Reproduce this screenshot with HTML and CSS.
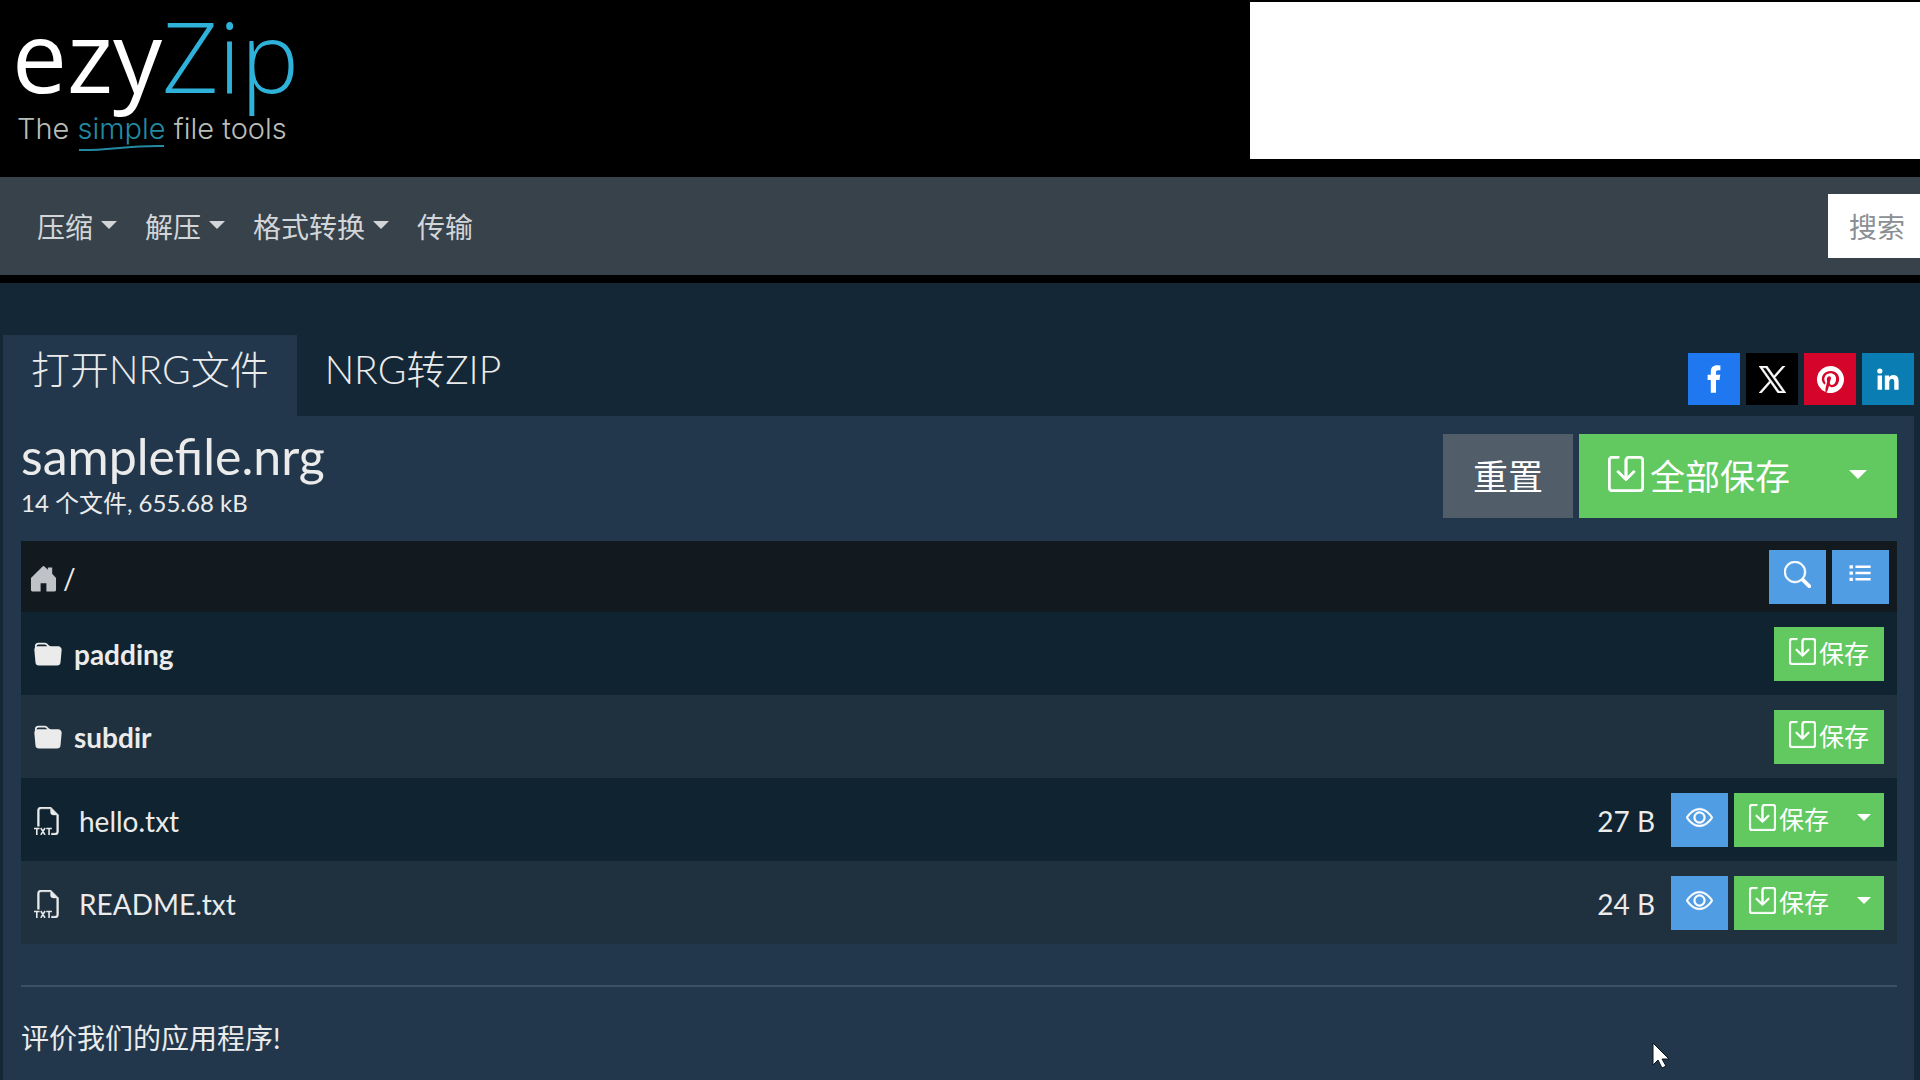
FILE: index.html
```html
<!DOCTYPE html>
<html lang="zh-CN">
<head>
    <meta charset="UTF-8">
    <meta name="viewport" content="width=device-width, initial-scale=1.0">
    <title>ezyZip</title>
    <link rel="stylesheet" href="styles.css">
</head>
<body>
    <!-- Shared icons -->
    <svg class="sprite" aria-hidden="true">
        <symbol id="icon-save" viewBox="0 0 16 16">
            <path stroke="currentColor" stroke-width=".4" d="M2 1a1 1 0 0 0-1 1v12a1 1 0 0 0 1 1h12a1 1 0 0 0 1-1V2a1 1 0 0 0-1-1H9.5a1 1 0 0 0-1 1v7.293l2.646-2.647a.5.5 0 0 1 .708.708l-3.5 3.5a.5.5 0 0 1-.708 0l-3.5-3.5a.5.5 0 1 1 .708-.708L7.5 9.293V2a2 2 0 0 1 2-2H14a2 2 0 0 1 2 2v12a2 2 0 0 1-2 2H2a2 2 0 0 1-2-2V2a2 2 0 0 1 2-2h2.5a.5.5 0 0 1 0 1z"/>
        </symbol>
        <symbol id="icon-folder" viewBox="0 0 16 16">
            <path d="M9.828 3h3.982a2 2 0 0 1 1.992 2.181l-.637 7A2 2 0 0 1 13.174 14H2.825a2 2 0 0 1-1.991-1.819l-.637-7a2 2 0 0 1 .342-1.31L.5 3a2 2 0 0 1 2-2h3.672a2 2 0 0 1 1.414.586l.828.828A2 2 0 0 0 9.828 3m-8.322.12q.322-.119.684-.12h5.396l-.707-.707A1 1 0 0 0 6.172 2H2.5a1 1 0 0 0-1 .981z"/>
        </symbol>
        <symbol id="icon-txt" viewBox="0 0 16 16">
            <path fill-rule="evenodd" stroke="currentColor" stroke-width=".3" d="M14 4.5V14a2 2 0 0 1-2 2h-2v-1h2a1 1 0 0 0 1-1V4.500h-2A1.500 1.500 0 0 1 9.500 3V1H4a1 1 0 0 0-1 1v9H2V2a2 2 0 0 1 2-2h5.500z"/>
            <path fill="none" stroke="currentColor" stroke-width=".9" d="M0 12.300h3.200M1.600 12.300v3.700M3.900 12l2.400 3.900M6.300 12l-2.400 3.900M7 12.300h3.200M8.600 12.300v3.700"/>
        </symbol>
        <symbol id="icon-eye" viewBox="0 0 16 16">
            <path stroke="currentColor" stroke-width=".3" d="M16 8s-3-5.500-8-5.500S0 8 0 8s3 5.500 8 5.500S16 8 16 8M1.173 8a13 13 0 0 1 1.660-2.043C4.120 4.668 5.880 3.500 8 3.500s3.879 1.168 5.168 2.457A13 13 0 0 1 14.828 8q-.086.130-.195.288c-.335.480-.830 1.120-1.465 1.755C11.879 11.332 10.119 12.500 8 12.500s-3.879-1.168-5.168-2.457A13 13 0 0 1 1.172 8z"/>
            <path stroke="currentColor" stroke-width=".3" d="M8 5.500a2.500 2.500 0 1 0 0 5 2.500 2.500 0 0 0 0-5M4.500 8a3.500 3.500 0 1 1 7 0 3.500 3.500 0 0 1-7 0"/>
        </symbol>
    </svg>

    <header class="header">
        <a class="logo" href="#" aria-label="ezyZip">
            <svg width="290" height="160" viewBox="0 0 290 160">
                <text class="logo-name" x="0" y="93">ezy<tspan class="logo-zip">Zip</tspan></text>
                <text class="logo-tagline" x="5" y="139">The <tspan class="logo-simple">simple</tspan> file tools</text>
                <path d="M67 150C93 151 118 145 152 146" fill="none" stroke="#248aa3" stroke-width="2"/>
            </svg>
        </a>
        <div class="ad"></div>
    </header>

    <nav class="navbar">
        <a class="nav-link dropdown" href="#">压缩</a>
        <a class="nav-link dropdown" href="#">解压</a>
        <a class="nav-link dropdown" href="#">格式转换</a>
        <a class="nav-link" href="#">传输</a>
        <form class="search">
            <input type="text" placeholder="搜索" aria-label="搜索">
        </form>
    </nav>

    <div class="tab-bar">
        <div class="tabs">
            <a class="tab active" href="#">打开NRG文件</a>
            <a class="tab" href="#">NRG转ZIP</a>
        </div>
        <div class="share">
            <a class="facebook" href="#" aria-label="Facebook">
                <svg viewBox="0 0 32 32"><path d="M13 29V17h-3v-5h3V9c0-4 2.300-6 6-6l3 .300v4.500h-2c-1.700 0-2.100.800-2.100 2.200v2h4l-.700 5h-3.300v12z"/></svg>
            </a>
            <a class="x" href="#" aria-label="X">
                <svg viewBox="0 0 24 24"><path stroke="currentColor" stroke-width=".6" d="M14.258 10.152 23.176 0h-2.113l-7.747 8.813L7.133 0H0l9.352 13.328L0 23.973h2.113l8.176-9.309 6.531 9.309h7.133zm-2.895 3.293-.949-1.328L2.875 1.560h3.246l6.086 8.523.945 1.328 7.910 11.078h-3.246z"/></svg>
            </a>
            <a class="pinterest" href="#" aria-label="Pinterest">
                <svg viewBox="0 0 16 16"><path d="M8 0a8 8 0 0 0-2.915 15.452c-.070-.633-.134-1.606.027-2.297.146-.625.938-3.977.938-3.977s-.239-.479-.239-1.187c0-1.113.645-1.943 1.448-1.943.682 0 1.012.512 1.012 1.127 0 .686-.437 1.712-.663 2.663-.188.796.400 1.446 1.185 1.446 1.422 0 2.515-1.500 2.515-3.664 0-1.915-1.377-3.254-3.342-3.254-2.276 0-3.612 1.707-3.612 3.471 0 .688.265 1.425.595 1.826a.240.240 0 0 1 .056.230c-.061.252-.196.796-.222.907-.035.146-.116.177-.268.107-1-.465-1.624-1.926-1.624-3.100 0-2.523 1.834-4.840 5.286-4.840 2.775 0 4.932 1.977 4.932 4.620 0 2.757-1.739 4.976-4.151 4.976-.811 0-1.573-.421-1.834-.919l-.498 1.902c-.181.695-.669 1.566-.995 2.097A8 8 0 1 0 8 0"/></svg>
            </a>
            <a class="linkedin" href="#" aria-label="LinkedIn">
                <svg viewBox="0 0 32 32"><path d="M6.200 12.600h4.200V26H6.200zM8.300 6a2.400 2.400 0 1 1 0 4.900 2.400 2.400 0 0 1 0-4.900M13 12.600h4v1.800c.600-1.100 2-2.200 4-2.200 4.200 0 5 2.800 5 6.400V26h-4.100v-6.500c0-1.600 0-3.600-2.200-3.600s-2.500 1.700-2.500 3.500V26H13z"/></svg>
            </a>
        </div>
    </div>

    <main class="panel">
        <div class="file-header">
            <div>
                <h1>samplefile.nrg</h1>
                <div class="summary">14 个文件, 655.68 kB</div>
            </div>
            <div class="file-actions">
                <button class="btn btn-lg btn-grey" type="button">重置</button>
                <div class="btn-group">
                    <button class="btn btn-lg btn-green" type="button"><svg><use href="#icon-save"/></svg>全部保存</button>
                    <button class="btn btn-lg btn-green btn-caret" type="button" aria-label="更多保存选项"></button>
                </div>
            </div>
        </div>

        <div class="toolbar">
            <a class="home" href="#" aria-label="首页">
                <svg viewBox="0 0 28 28"><path d="M13 1.500q1-1 2 0l3.500 3.500V2.500h4.500V9l4 4.500V26q0 1.500-1.500 1.500H17V19h-6v8.500H2.500Q1 27.500 1 26V13.500z"/></svg>
            </a>
            <span class="path">/</span>
            <button class="btn btn-blue" type="button" aria-label="查找">
                <svg viewBox="0 0 16 16"><path stroke="currentColor" stroke-width=".3" d="M11.742 10.344a6.500 6.500 0 1 0-1.397 1.398h-.001q.044.060.098.115l3.850 3.850a1 1 0 0 0 1.415-1.414l-3.850-3.850a1 1 0 0 0-.115-.100zM12 6.500a5.500 5.500 0 1 1-11 0 5.500 5.500 0 0 1 11 0"/></svg>
            </button>
            <button class="btn btn-blue" type="button" aria-label="列表">
                <svg viewBox="0 0 16 16"><path d="M1.500 2.500h2v2h-2zm3.500 .200h9v1.500H5zM1.500 6.200h2v2h-2zm3.500 .200h9v1.500H5zM1.500 9.900h2v2h-2zm3.500 .200h9v1.500H5z"/></svg>
            </button>
        </div>

        <table class="files">
            <tbody>
                <tr>
                    <td class="folder"><svg><use href="#icon-folder"/></svg>padding</td>
                    <td>
                        <div class="actions">
                            <button class="btn btn-green" type="button"><svg><use href="#icon-save"/></svg>保存</button>
                        </div>
                    </td>
                </tr>
                <tr>
                    <td class="folder"><svg><use href="#icon-folder"/></svg>subdir</td>
                    <td>
                        <div class="actions">
                            <button class="btn btn-green" type="button"><svg><use href="#icon-save"/></svg>保存</button>
                        </div>
                    </td>
                </tr>
                <tr>
                    <td class="file"><svg><use href="#icon-txt"/></svg>hello.txt</td>
                    <td>
                        <div class="actions">
                            <span class="size">27 B</span>
                            <button class="btn btn-blue" type="button" aria-label="预览"><svg><use href="#icon-eye"/></svg></button>
                            <div class="btn-group">
                                <button class="btn btn-green" type="button"><svg><use href="#icon-save"/></svg>保存</button>
                                <button class="btn btn-green btn-caret" type="button" aria-label="更多保存选项"></button>
                            </div>
                        </div>
                    </td>
                </tr>
                <tr>
                    <td class="file"><svg><use href="#icon-txt"/></svg>README.txt</td>
                    <td>
                        <div class="actions">
                            <span class="size">24 B</span>
                            <button class="btn btn-blue" type="button" aria-label="预览"><svg><use href="#icon-eye"/></svg></button>
                            <div class="btn-group">
                                <button class="btn btn-green" type="button"><svg><use href="#icon-save"/></svg>保存</button>
                                <button class="btn btn-green btn-caret" type="button" aria-label="更多保存选项"></button>
                            </div>
                        </div>
                    </td>
                </tr>
            </tbody>
        </table>

        <hr>
        <p class="rate">评价我们的应用程序!</p>
    </main>

    <svg class="pointer" viewBox="0 0 18 28" aria-hidden="true">
        <path d="M1 1v22l5-5 4 8 4-2-4-7h7z" fill="#fff" stroke="#0b141c" stroke-width="1"/>
    </svg>
</body>
</html>
```
FILE: styles.css
```css
* {
    box-sizing: border-box;
}

body {
    display: flex;
    flex-direction: column;
    min-height: 100vh;
    margin: 0;
    overflow-x: hidden;
    background-color: #142736;
    color: #ebebeb;
    font-family: Lato, "Noto Sans CJK SC", sans-serif;
    font-size: 28px;
    line-height: 42px;
}

a {
    color: inherit;
    text-decoration: none;
}

svg {
    fill: currentColor;
}

.sprite {
    display: none;
}

/* Header */
.header {
    display: flex;
    justify-content: space-between;
    height: 177px;
    padding-left: 12px;
    background-color: #000;
}

.logo svg {
    display: block;
    overflow: visible;
}

.logo-name {
    fill: #fff;
    font-family: "Open Sans", sans-serif;
    font-size: 98px;
}

.logo-zip {
    fill: #2fb2da;
    font-weight: 300;
}

.logo-tagline {
    fill: #b9bdb8;
    font-family: Inter, sans-serif;
    font-size: 29px;
    font-weight: 300;
}

.logo-simple {
    fill: #248aa3;
}

.ad {
    width: 670px;
    height: 157px;
    margin-top: 2px;
    background-color: #fff;
}

/* Navigation */
.navbar {
    display: flex;
    align-items: center;
    gap: 28px;
    height: 106px;
    padding-left: 37px;
    border-bottom: 8px solid #000;
    background-color: #38424b;
}

.nav-link {
    padding-top: 2px;
    color: #d3d6d9;
}

.dropdown::after,
.btn-caret::after {
    content: "";
    display: inline-block;
    border: 8px solid transparent;
    border-top-color: currentColor;
    border-bottom: 0;
}

.dropdown::after {
    margin-left: 8px;
    vertical-align: 9px;
}

.search {
    width: 92px;
    margin-left: auto;
}

.search input {
    display: block;
    width: 100%;
    height: 64px;
    padding: 2px 0 0 21px;
    border: 0;
    background-color: #fff;
    font: inherit;
}

.search input::placeholder {
    color: #8a8f94;
}

/* Tabs */
.tab-bar {
    display: flex;
    justify-content: space-between;
    align-items: flex-end;
    padding: 52px 6px 0 3px;
}

.tabs {
    display: flex;
}

.tab {
    padding: 6px 28px 19px;
    font-size: 39px;
    font-weight: 300;
    line-height: 56px;
}

.tab.active {
    background-color: #22374b;
}

.share {
    display: flex;
    gap: 6px;
    padding-bottom: 11px;
}

.share a {
    display: flex;
    justify-content: center;
    align-items: center;
    width: 52px;
    height: 52px;
    color: #fff;
}

.share svg {
    width: 34px;
    height: 34px;
}

.share .x svg,
.share .pinterest svg {
    width: 27px;
    height: 27px;
}

.facebook {
    background-color: #1f78f0;
}

.x {
    background-color: #000;
}

.pinterest {
    background-color: #d5042a;
}

.linkedin {
    background-color: #0a7eb3;
}

/* Panel */
.panel {
    flex: 1;
    margin: 0 6px 0 3px;
    padding: 12px 17px 0 18px;
    background-color: #22374b;
}

.file-header {
    display: flex;
    justify-content: space-between;
    align-items: flex-start;
    height: 113px;
    padding-top: 6px;
}

h1 {
    margin: 0;
    font-size: 50px;
    font-weight: 400;
    line-height: 44px;
}

.summary {
    font-size: 24px;
    line-height: 50px;
}

.file-actions {
    display: flex;
    gap: 6px;
}

/* Buttons */
.btn {
    display: flex;
    justify-content: center;
    align-items: center;
    min-width: 57px;
    height: 54px;
    padding: 0 15px 4px;
    border: 0;
    color: #fff;
    font-family: inherit;
    font-size: 25px;
    cursor: pointer;
}

.btn svg {
    width: 27px;
    height: 27px;
}

.btn-green svg {
    margin-right: 3px;
}

.btn-lg {
    height: 84px;
    padding: 0 29px 4px;
    font-size: 35px;
}

.btn-lg svg {
    width: 36px;
    height: 36px;
    margin-right: 6px;
}

.btn-grey {
    padding: 0 30px 4px;
    background-color: #515d69;
}

.btn-green {
    background-color: #62c860;
}

.btn-blue {
    background-color: #509de4;
}

.btn-group {
    display: flex;
}

.btn-caret {
    min-width: 0;
    padding: 0 13px 4px;
}

.btn-caret::after {
    border-width: 7px;
    border-bottom: 0;
}

.btn-lg.btn-caret {
    padding: 0 30px 4px;
}

.btn-lg.btn-caret::after {
    border-width: 9px;
    border-bottom: 0;
}

/* File list */
.toolbar {
    display: flex;
    align-items: center;
    gap: 6px;
    height: 71px;
    padding: 0 8px;
    background-color: #12191f;
}

.home {
    display: flex;
    padding: 3px 0 0 1px;
    color: #bfc3c7;
}

.home svg {
    width: 27px;
    height: 27px;
}

.path {
    flex: 1;
    padding-top: 3px;
}

.files {
    width: 100%;
    border-collapse: collapse;
}

.files tr {
    height: 83px;
    background-color: #1f303e;
}

.files tr:nth-child(odd) {
    background-color: #102330;
}

.files td {
    padding: 0 13px;
}

.files .folder svg,
.files .file svg {
    width: 28px;
    height: 28px;
    margin-right: 12px;
    vertical-align: -4px;
}

.folder {
    font-weight: 700;
}

.files .file {
    padding-top: 3px;
}

.files .file svg {
    margin-right: 17px;
    vertical-align: -3px;
}

.actions {
    display: flex;
    justify-content: flex-end;
    align-items: center;
    gap: 6px;
}

.size {
    margin-right: 10px;
    padding-top: 3px;
}

hr {
    margin: 41px 0 0;
    border: 0;
    border-top: 2px solid #3a5165;
}

.rate {
    margin: 30px 0 0;
}

/* Mouse pointer */
.pointer {
    position: fixed;
    right: 250px;
    bottom: 10px;
    width: 18px;
    height: 28px;
}
```
